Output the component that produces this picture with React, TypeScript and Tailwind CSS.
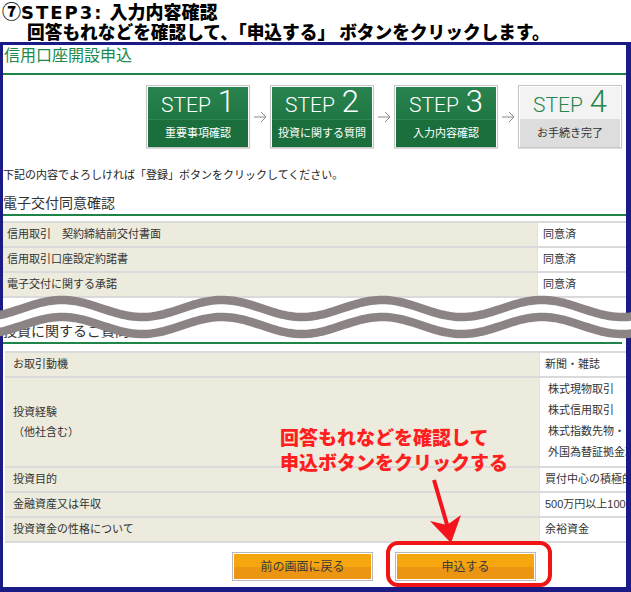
import React from "react";

const CJK = "font-['Liberation_Sans','Noto_Sans_CJK_JP',sans-serif]";

function wavePts(offset: number): [number, number][] {
  const pts: [number, number][] = [];
  for (let x = -10; x <= 645; x += 3) {
    const y = 308.5 + offset - 8.5 * Math.cos((2 * Math.PI * (x - 62)) / 160);
    pts.push([x, y]);
  }
  return pts;
}

function toPath(pts: [number, number][]) {
  return pts.map((p, i) => `${i === 0 ? "M" : "L"}${p[0]} ${p[1].toFixed(2)}`).join(" ");
}

function Step({ n, label, done }: { n: string; label: string; done: boolean }) {
  return (
    <div className="w-[104px] h-[63px] border border-[#c6c6c6] bg-white p-[1px] shadow-[0_1px_1px_rgba(0,0,0,0.12)]">
      {done ? (
        <>
          <div className="h-[32px] bg-gradient-to-b from-[#2a8450] to-[#1f7743] text-white flex items-end justify-center font-['Roboto',sans-serif] font-light leading-none pb-[2px]">
            <span className="text-[21px] mb-[1px]">STEP</span>
            <span className="text-[31px] ml-[7px]">{n}</span>
          </div>
          <div className="h-[28px] bg-[#1b6f3d] border-t border-[#2b8a52] text-white text-[11px] flex items-center justify-center">
            {label}
          </div>
        </>
      ) : (
        <>
          <div className="h-[32px] bg-[#f3f3f3] text-[#24864c] flex items-end justify-center font-['Roboto',sans-serif] font-light leading-none pb-[2px]">
            <span className="text-[21px] mb-[1px]">STEP</span>
            <span className="text-[31px] ml-[7px]">{n}</span>
          </div>
          <div className="h-[28px] bg-[#dddddd] text-[#333] text-[11px] flex items-center justify-center">{label}</div>
        </>
      )}
    </div>
  );
}

function StepArrow() {
  return (
    <div className="w-[20px] h-[63px] flex items-center justify-center">
      <svg width="16" height="14" viewBox="0 0 16 14">
        <path d="M2 7 H14 M9 2 L14 7 L9 12" fill="none" stroke="#8a8a8a" strokeWidth="1" />
      </svg>
    </div>
  );
}

function Row({ left, right, h }: { left: React.ReactNode; right: React.ReactNode; h: string }) {
  return (
    <div className={`flex border-b-2 border-[#dadada] ${h}`}>
      <div className="w-[535px] shrink-0 bg-[#ecebdd] flex items-center pl-[4px] border-r border-[#e2e2e2]">{left}</div>
      <div className="flex-1 bg-white flex items-center pl-[5px] whitespace-nowrap overflow-hidden">{right}</div>
    </div>
  );
}

function Button({ label }: { label: string }) {
  return (
    <div className="w-[141px] h-[29px] border border-[#b8b8b8] bg-white p-[1px]">
      <div className="h-full flex flex-col relative">
        <div className="h-1/2 bg-[#f6a70d]" />
        <div className="h-1/2 bg-[#ec9513]" />
        <div className="absolute inset-0 flex items-center justify-center text-[12px] text-[#3a3a3a]">{label}</div>
      </div>
    </div>
  );
}

export default function App() {
  const up = wavePts(0);
  const low = wavePts(17);
  const band = toPath(up) + " " + low.slice().reverse().map((p) => `L${p[0]} ${p[1].toFixed(2)}`).join(" ") + " Z";

  return (
    <div className={`w-[631px] h-[592px] bg-white overflow-hidden relative ${CJK}`}>
      {/* header */}
      <div className="h-[42px] text-black font-black font-['Noto_Sans_CJK_JP',sans-serif] pt-[1px]">
        <div className="pl-[2px] h-[20px] leading-[20px] text-[18px] flex items-baseline whitespace-nowrap">
          <span className="text-[19px]">⑦</span>
          <span className="font-['DejaVu_Sans',sans-serif] font-bold text-[18px] tracking-[2px]">STEP3:</span>
          <span className="ml-[6px]">入力内容確認</span>
        </div>
        <div className="pl-[27px] h-[21px] leading-[21px] text-[17.7px] whitespace-nowrap">回答もれなどを確認して、「申込する」 ボタンをクリックします。</div>
      </div>

      {/* frame */}
      <div className="h-[550px] border-t-[3px] border-l-[3px] border-r-[5px] border-b-[5px] border-[#1b1b86] overflow-hidden">
        <div className="h-[28px] text-[16px] leading-[22px] text-[#1b8a4c] pl-[1px] border-b-2 border-[#1f8447] box-content">
          信用口座開設申込
        </div>

        <div className="mt-[10px] h-[63px] flex pl-[143px]">
          <Step n="1" label="重要事項確認" done />
          <StepArrow />
          <Step n="2" label="投資に関する質問" done />
          <StepArrow />
          <Step n="3" label="入力内容確認" done />
          <StepArrow />
          <Step n="4" label="お手続き完了" done={false} />
        </div>

        <div className="mt-[19px] h-[16px] leading-[16px] text-[11px] text-[#222]">
          下記の内容でよろしければ「登録」ボタンをクリックしてください。
        </div>

        <div className="mt-[9px] h-[22px] leading-[22px] text-[14px] text-[#333] border-b-2 border-[#1f8447] box-content">
          電子交付同意確認
        </div>

        <div className="mt-[5px] border-t-2 border-[#dadada] text-[11px] text-[#333]">
          <Row h="h-[25px]" left="信用取引　契約締結前交付書面" right="同意済" />
          <Row h="h-[25px]" left="信用取引口座設定約諾書" right="同意済" />
          <Row h="h-[25px]" left="電子交付に関する承諾" right="同意済" />
        </div>

        <div className="mt-[22px] h-[22px] leading-[22px] text-[14px] text-[#333] border-b-2 border-[#1f8447] box-content mr-[4px]">
          投資に関するご質問
        </div>

        <div className="mt-[7px] ml-[2px] border-t-2 border-[#dadada] text-[11px] text-[#333]">
          <Row h="h-[25px]" left={<span className="pl-[4px]">お取引動機</span>} right="新聞・雑誌" />
          <Row
            h="h-[90px]"
            left={
              <div className="pl-[4px] leading-[20px]">
                <div>投資経験</div>
                <div>（他社含む）</div>
              </div>
            }
            right={
              <div className="pl-[3px] leading-[21px] self-start pt-[1px]">
                <div>株式現物取引</div>
                <div>株式信用取引</div>
                <div>株式指数先物・オプション</div>
                <div>外国為替証拠金取引</div>
              </div>
            }
          />
          <Row h="h-[25px]" left={<span className="pl-[4px]">投資目的</span>} right="買付中心の積極的な運用" />
          <Row h="h-[25px]" left={<span className="pl-[4px]">金融資産又は年収</span>} right="500万円以上1000万円未満" />
          <Row h="h-[25px]" left={<span className="pl-[4px]">投資資金の性格について</span>} right="余裕資金" />
        </div>

        <div className="mt-[9px] flex pl-[229px] gap-[22px]">
          <Button label="前の画面に戻る" />
          <Button label="申込する" />
        </div>
      </div>

      {/* annotation text */}
      <div className="absolute left-[280px] top-[424px] text-[19px] leading-[25px] font-black font-['Noto_Sans_CJK_JP',sans-serif] text-[#ff1e1e] whitespace-nowrap">
        <div>回答もれなどを確認して</div>
        <div>申込ボタンをクリックする</div>
      </div>

      {/* overlays */}
      <svg className="absolute left-0 top-0 pointer-events-none" width="631" height="592" viewBox="0 0 631 592">
        <path d={band} fill="#ffffff" />
        <path d={toPath(up)} fill="none" stroke="#8b8384" strokeWidth="8.5" />
        <path d={toPath(low)} fill="none" stroke="#8b8384" strokeWidth="8.5" />
        <rect x="388" y="543" width="162" height="42" rx="10" ry="10" fill="none" stroke="#f01414" strokeWidth="4" />
        <line x1="434" y1="480" x2="448" y2="528" stroke="#f5141e" strokeWidth="4" />
        <path d="M430 521 L451 543 L461 515 L447 525 Z" fill="#f5141e" />
      </svg>
    </div>
  );
}
